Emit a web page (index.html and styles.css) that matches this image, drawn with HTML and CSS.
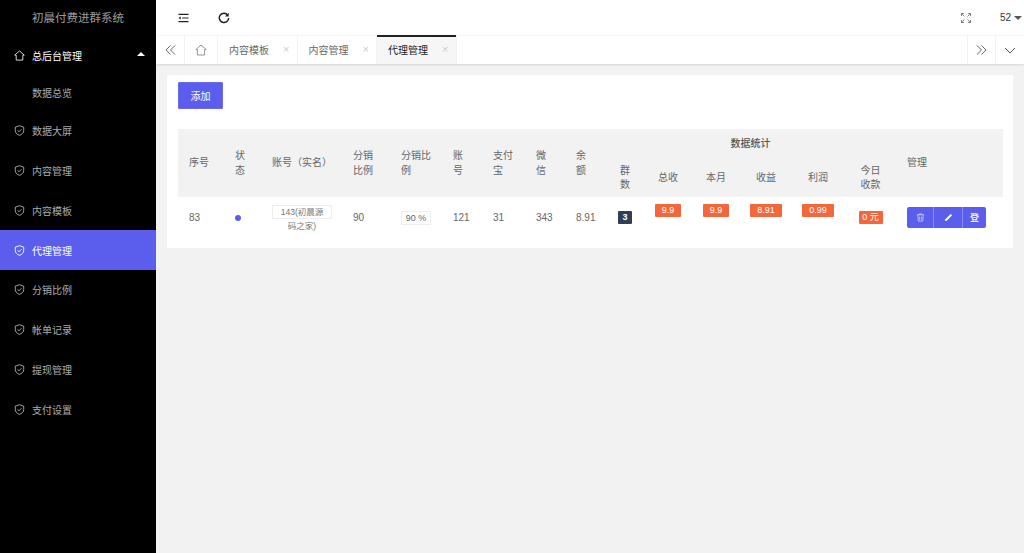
FILE: index.html
```html
<!DOCTYPE html>
<html lang="zh-CN">
<head>
<meta charset="utf-8">
<title>代理管理</title>
<link rel="stylesheet" href="styles.css">
</head>
<body>
<svg class="defs" aria-hidden="true">
  <symbol id="shield" viewBox="0 0 12 12"><path d="M6 .8 10.600 2.400V6c0 2.600-2 4.300-4.600 5.300C3.400 10.300 1.400 8.600 1.400 6V2.400Z" fill="none" stroke="currentColor"/><path d="M3.900 5.900 5.500 7.400 8.200 4.600" fill="none" stroke="currentColor"/></symbol>
  <symbol id="home" viewBox="0 0 12 12"><path d="M6 1 11.200 5.600H9.600V11H2.400V5.600H.8Z" fill="none" stroke="currentColor" stroke-width=".9"/></symbol>
</svg>
<div class="app">
  <aside class="sidebar">
    <div class="brand">初晨付费进群系统</div>
    <nav class="nav">
      <a class="nav-item nav-item--open"><svg class="nav-icon"><use href="#home"/></svg>总后台管理<span class="caret-up"></span></a>
      <a class="nav-item nav-item--sub">数据总览</a>
      <a class="nav-item"><svg class="nav-icon"><use href="#shield"/></svg>数据大屏</a>
      <a class="nav-item"><svg class="nav-icon"><use href="#shield"/></svg>内容管理</a>
      <a class="nav-item"><svg class="nav-icon"><use href="#shield"/></svg>内容模板</a>
      <a class="nav-item nav-item--active"><svg class="nav-icon"><use href="#shield"/></svg>代理管理</a>
      <a class="nav-item"><svg class="nav-icon"><use href="#shield"/></svg>分销比例</a>
      <a class="nav-item"><svg class="nav-icon"><use href="#shield"/></svg>帐单记录</a>
      <a class="nav-item"><svg class="nav-icon"><use href="#shield"/></svg>提现管理</a>
      <a class="nav-item"><svg class="nav-icon"><use href="#shield"/></svg>支付设置</a>
    </nav>
  </aside>
  <div class="main">
    <header class="topbar">
      <svg class="top-icon" viewBox="0 0 12 10"><path d="M.5 1h11M4.500 5h7M.5 9h11" fill="none" stroke="#222" stroke-width="1.200"/><path d="M3 3.300.6 5 3 6.700Z" fill="#222"/></svg>
      <svg class="top-icon top-icon--refresh" viewBox="0 0 12 12"><path d="M9.800 3.100A4.700 4.700 0 1 0 10.700 6" fill="none" stroke="#222" stroke-width="1.500"/><path d="M10.700.7V4.400H7Z" fill="#222"/></svg>
      <div class="topbar-right">
        <svg class="full-icon" viewBox="0 0 10 10"><path d="M.5 3V.5H3M.5.5 3.500 3.500M7 .5H9.500V3M9.500.5 6.500 3.500M.5 7V9.500H3M.5 9.500 3.500 6.500M7 9.500H9.500V7M9.500 9.500 6.500 6.500" fill="none" stroke="#666" stroke-width=".8"/></svg>
        <span class="user">52</span><span class="caret-down"></span>
      </div>
    </header>
    <div class="tabs">
      <span class="tab-btn"><svg class="tab-arrow" viewBox="0 0 12 11"><path d="M6 .5 1 5.500 6 10.500M11 .5 6 5.500 11 10.500" fill="none" stroke="#555"/></svg></span>
      <span class="tab-home"><svg class="tab-home-icon"><use href="#home"/></svg></span>
      <span class="tab">内容模板<i class="tab-x">×</i></span>
      <span class="tab">内容管理<i class="tab-x">×</i></span>
      <span class="tab tab--active">代理管理<i class="tab-x">×</i></span>
      <span class="tabs-spacer"></span>
      <span class="tab-btn tab-btn--left"><svg class="tab-arrow" viewBox="0 0 12 11"><path d="M1 .5 6 5.500 1 10.500M6 .5 11 5.500 6 10.500" fill="none" stroke="#555"/></svg></span>
      <span class="tab-btn tab-btn--last"><svg class="tab-chevron" viewBox="0 0 12 7"><path d="M1 1 6 6 11 1" fill="none" stroke="#555"/></svg></span>
    </div>
    <main class="content">
      <section class="card">
        <button class="add-btn">添加</button>
        <table class="grid">
          <colgroup>
            <col class="c46"><col class="c37"><col class="c81"><col class="c48"><col class="c52"><col class="c40"><col class="c43"><col class="c40"><col class="c40"><col class="c40"><col class="c46"><col class="c50"><col class="c50"><col class="c54"><col class="c51"><col>
          </colgroup>
          <thead>
            <tr class="head-top">
              <th rowspan="2">序号</th><th rowspan="2">状态</th><th rowspan="2">账号（实名）</th><th rowspan="2">分销比例</th><th rowspan="2">分销比例</th><th rowspan="2">账号</th><th rowspan="2">支付宝</th><th rowspan="2">微信</th><th rowspan="2">余额</th>
              <th colspan="6" class="group-title">数据统计</th>
              <th rowspan="2">管理</th>
            </tr>
            <tr class="head-sub">
              <th class="center">群数</th><th class="center">总收</th><th class="center">本月</th><th class="center">收益</th><th class="center">利润</th><th class="center">今日收款</th>
            </tr>
          </thead>
          <tbody>
            <tr>
              <td>83</td>
              <td><span class="dot"></span></td>
              <td><div class="name-box">143(初晨源码之家)</div></td>
              <td>90</td>
              <td><span class="pct-box">90 %</span></td>
              <td>121</td><td>31</td><td>343</td><td>8.91</td>
              <td class="center"><span class="num-badge">3</span></td>
              <td class="center"><span class="money money--up">9.9</span></td>
              <td class="center"><span class="money money--up">9.9</span></td>
              <td class="center"><span class="money money--up">8.91</span></td>
              <td class="center"><span class="money money--up">0.99</span></td>
              <td class="center"><span class="money">0 元</span></td>
              <td>
                <div class="actions">
                  <button class="act act--del"><svg class="act-icon" viewBox="0 0 10 10"><path d="M1 2H9M3.500 2V1H6.500V2M2 2 2.500 9H7.500L8 2M4 4V7.500M6 4V7.500" fill="none" stroke="#dcdcff" stroke-width=".8"/></svg></button>
                  <button class="act act--edit"><svg class="act-icon" viewBox="0 0 10 10"><path d="M1 9 1.500 7 7.500 1 9 2.500 3 8.500Z" fill="#fff"/></svg></button>
                  <button class="act act--login">登</button>
                </div>
              </td>
            </tr>
          </tbody>
        </table>
      </section>
    </main>
  </div>
</div>
</body>
</html>
```
FILE: styles.css
```css
* { box-sizing: border-box; }
html, body { margin: 0; height: 100%; }
body {
  font-family: "Liberation Sans", "Noto Sans CJK SC", sans-serif;
  font-size: 10px;
  color: #666;
  background: #f2f2f2;
  overflow: hidden;
}
.defs { display: none; }
.app { display: flex; height: 553px; }

.sidebar { width: 156px; flex: none; background: #000; color: rgba(255,255,255,.68); }
.brand { height: 37px; padding-left: 32px; line-height: 36px; font-size: 11.500px; color: rgba(255,255,255,.62); white-space: nowrap; }
.nav-item { display: flex; align-items: center; height: 39.750px; padding-left: 14px; position: relative; font-size: 10px; }
.nav-item--open { color: #fff; height: 36px; }
.nav-item--sub { padding-left: 32px; height: 38px; }
.nav-item--active { background: #5b5eec; color: #fff; }
.nav-icon { width: 11px; height: 11px; margin-right: 7px; flex: none; }
.caret-up { position: absolute; left: 137px; top: 15px; border: 4.500px solid transparent; border-top: 0; border-bottom: 4.500px solid #fff; }

.main { flex: 1; min-width: 0; display: flex; flex-direction: column; }
.topbar { display: flex; align-items: center; height: 35px; background: #fff; padding-left: 22px; }
.top-icon { width: 11px; height: 10px; }
.top-icon--refresh { width: 12px; height: 12px; margin-left: 29px; }
.topbar-right { margin-left: auto; display: flex; align-items: center; padding-right: 2px; }
.full-icon { width: 10px; height: 10px; margin-right: 29px; }
.user { color: #333; }
.caret-down { margin-left: 3px; border: 4.500px solid transparent; border-bottom: 0; border-top: 4.500px solid #555; }

.tabs { display: flex; height: 29px; background: #fff; border-top: 1px solid #f6f6f6; box-shadow: 0 1px 2px rgba(0,0,0,.12); }
.tab-btn { width: 29px; display: flex; align-items: center; justify-content: center; border-right: 1px solid #f2f2f2; }
.tab-btn--left { width: 28px; border-left: 1px solid #f2f2f2; border-right: 0; }
.tab-btn--last { border-left: 1px solid #f2f2f2; border-right: 0; }
.tab-arrow { width: 11px; height: 10px; }
.tab-chevron { width: 12px; height: 7px; }
.tab-home { width: 33px; display: flex; align-items: center; justify-content: center; border-right: 1px solid #f2f2f2; color: #888; }
.tab-home-icon { width: 12px; height: 12px; }
.tab { width: 79.500px; padding: 0 0 2px 11px; color: #666; border-right: 1px solid #f2f2f2; display: flex; align-items: center; }
.tab--active { background: #f6f6f6; color: #222; position: relative; }
.tab--active::before { content: ""; position: absolute; left: 0; right: 0; top: -1px; height: 2px; background: #222; }
.tab-x { font-style: normal; color: #ccc; font-size: 11px; line-height: 11px; margin-left: 14px; }
.tabs-spacer { flex: 1; }

.content { padding: 11px 11px; }
.card { background: #fff; padding: 7px 11px 10px; height: 173px; }
.add-btn { display: block; width: 45px; height: 27px; padding: 0; border: 1px solid #6a6aef; border-radius: 1px; background: #5b5eec; color: #fff; font: inherit; font-size: 10px; }

.grid { margin-top: 20px; width: 825px; table-layout: fixed; border-collapse: collapse; }
.c46 { width: 46px; } .c37 { width: 37px; } .c81 { width: 81px; } .c48 { width: 48px; }
.c52 { width: 52px; } .c40 { width: 40px; } .c43 { width: 43px; } .c50 { width: 50px; } .c51 { width: 51px; } .c54 { width: 54px; }
.grid th { background: #f2f2f2; font-weight: 400; text-align: left; padding: 1px 11px 0; line-height: 14.500px; color: #666; }
.head-top { height: 29px; }
.head-sub { height: 39px; }
.grid th.group-title { text-align: center; font-weight: 500; color: #555; }
.grid th.center, .grid td.center { text-align: center; }
.grid td { height: 41px; padding: 0 11px; vertical-align: middle; line-height: 14px; color: #666; }
.dot { display: block; width: 6px; height: 6px; border-radius: 50%; background: #5b5eec; }
.name-box { width: 60px; height: 14px; padding: 0 8px; box-shadow: inset 0 0 0 1px #eee; text-align: center; font-size: 8.500px; line-height: 14px; margin-bottom: 12px; color: #777; }
.pct-box { display: block; width: 30px; height: 14px; border: 1px solid #eee; text-align: center; font-size: 9px; line-height: 12px; }
.num-badge { display: inline-block; min-width: 14px; height: 13px; background: #2f4056; border-radius: 1px; color: #fff; font-size: 9px; font-weight: 700; line-height: 13px; vertical-align: middle; }
.grid td.center { padding: 0; }
.money { display: inline-block; padding: 0 3.750px; height: 13px; background: #f4673b; border-radius: 1px; color: #fff; font-size: 9px; line-height: 13px; vertical-align: middle; white-space: nowrap; }
.money--up { margin-bottom: 14px; padding: 0 6.750px; }
.actions { display: flex; width: 79px; height: 21px; }
.act { padding: 0; border: 0; border-right: 1px solid #8a8af3; background: #5b5eec; color: #eef; font: inherit; font-size: 9px; font-weight: 700; display: flex; align-items: center; justify-content: center; }
.act--del { width: 27px; border-radius: 2px 0 0 2px; }
.act--edit { width: 29px; }
.act--login { width: 23px; border-right: 0; border-radius: 0 2px 2px 0; }
.act-icon { width: 9px; height: 9px; }
```
